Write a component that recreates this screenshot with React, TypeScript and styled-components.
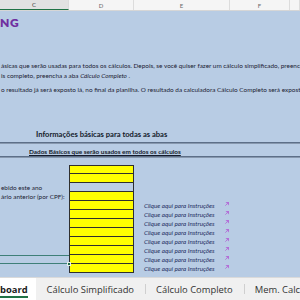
import React from "react";
import styled, { createGlobalStyle } from "styled-components";

const GlobalStyle = createGlobalStyle`
  html, body { margin: 0; padding: 0; width: 300px; height: 300px; overflow: hidden; background: #b8cce4; }
  #root { width: 300px; height: 300px; }
  * { box-sizing: border-box; }
`;

const COLS = [69, 65, 96, 60, 10];

const Page = styled.div`
  width: 300px;
  height: 300px;
  display: flex;
  flex-direction: column;
  overflow: hidden;
  font-family: Lato, "Liberation Sans", sans-serif;
`;

const ColumnHeader = styled.div`
  display: flex;
  height: 11px;
  flex: none;
  background: #f5f5f5;
  border-bottom: 1px solid #d6d6d6;
`;

const HeaderCell = styled.div<{ $w: number; $selected?: boolean }>`
  width: ${(p) => p.$w}px;
  flex: none;
  height: 100%;
  display: flex;
  align-items: center;
  justify-content: center;
  font-size: 6px;
  color: ${(p) => (p.$selected ? "#3c3c3c" : "#6a6a6a")};
  background: ${(p) => (p.$selected ? "#e2e2e2" : "transparent")};
  border-right: 1px solid #dcdcdc;
  border-bottom: ${(p) => (p.$selected ? "1.5px solid #217346" : "none")};
`;

const Sheet = styled.div`
  flex: 1;
  display: flex;
  flex-direction: column;
  overflow: hidden;
  background: #b8cce4;
  white-space: nowrap;
`;

const Title = styled.div`
  margin-top: 5px;
  height: 13px;
  line-height: 13px;
  font-size: 12px;
  font-weight: 800;
  color: #7030a0;
  letter-spacing: 0.6px;
`;

const Intro = styled.div`
  margin-top: 32px;
  display: flex;
  flex-direction: column;
`;

const IntroLine = styled.div<{ $gap?: number }>`
  height: 10px;
  line-height: 10px;
  font-size: 6.4px;
  color: #1c2233;
  margin-top: ${(p) => p.$gap ?? 0}px;
  padding-left: 1px;
  em { font-style: italic; }
`;

const Heading = styled.div`
  margin-top: 34px;
  height: 10px;
  line-height: 10px;
  font-size: 7.6px;
  font-weight: 700;
  color: #141a2a;
  padding-left: 36px;
`;

const Rule = styled.div<{ $gap: number }>`
  margin-top: ${(p) => p.$gap}px;
  height: 2px;
  background: #5d6f88;
  border-bottom: 1px solid #8798ae;
  flex: none;
`;

const SubHeading = styled.div`
  margin-top: 3px;
  height: 9px;
  line-height: 9px;
  font-size: 6.4px;
  font-weight: 700;
  color: #141a2a;
  padding-left: 29px;
  text-decoration: underline;
`;

const Grid = styled.div`
  margin-top: 7px;
  display: flex;
  flex-direction: column;
`;

const Row = styled.div`
  display: grid;
  grid-template-columns: ${COLS.map((c) => c + "px").join(" ")};
  height: 9px;
`;

const LabelCell = styled.div<{ $selected?: boolean }>`
  position: relative;
  font-size: 6.4px;
  color: #1c2233;
  padding-left: 1px;
  border-top: ${(p) => (p.$selected ? "1px solid #3e7f78" : "none")};
  border-bottom: ${(p) => (p.$selected ? "1px solid #3e7f78" : "none")};
  line-height: ${(p) => (p.$selected ? "7px" : "9px")};
`;

const Handle = styled.span`
  position: absolute;
  right: -2px;
  bottom: -3px;
  width: 4px;
  height: 4px;
  background: #1f6b4c;
  border: 1px solid #e8f0e8;
`;

const InputCell = styled.div<{ $filled: boolean; $first?: boolean }>`
  background: ${(p) => (p.$filled ? "#ffff00" : "#bccfe5")};
  border-left: 1px solid #2f2f2f;
  border-right: 1px solid #2f2f2f;
  border-bottom: 1px solid #2f2f2f;
  border-top: ${(p) => (p.$first ? "1px solid #2f2f2f" : "none")};
`;

const HintCell = styled.div`
  display: flex;
  align-items: center;
  justify-content: space-between;
  padding-left: 10px;
  padding-right: 1px;
  font-size: 6.3px;
  font-style: italic;
  color: #1f2e5e;
`;

const Mark = () => (
  <svg width="4" height="4" viewBox="0 0 4 4" style={{ marginTop: -3 }}>
    <polygon points="0.5,0 4,0 4,3.5" fill="#b26fd6" />
    <line x1="2.6" y1="1.4" x2="0.3" y2="3.7" stroke="#b26fd6" strokeWidth="0.9" />
  </svg>
);

const TabBar = styled.div`
  flex: none;
  height: 23px;
  display: flex;
  align-items: stretch;
  background: #f0f0f0;
  border-top: 1px solid #dadada;
  font-family: "Open Sans", "Noto Sans", sans-serif;
  font-size: 9.4px;
  white-space: nowrap;
`;

const ActiveTab = styled.div`
  background: #ffffff;
  padding: 0 8px 0 0;
  display: flex;
  align-items: center;
  font-weight: 700;
  color: #1b1b1b;
  span {
    border-bottom: 2px solid #217346;
    line-height: 12px;
    margin-top: 3px;
  }
`;

const Tab = styled.div<{ $sep?: boolean }>`
  display: flex;
  align-items: center;
  padding: 0 11px;
  color: #333333;
  position: relative;
  &::before {
    content: "";
    display: ${(p) => (p.$sep ? "block" : "none")};
    position: absolute;
    left: 0;
    top: 6px;
    bottom: 6px;
    width: 1px;
    background: #cfcfcf;
  }
`;

const labels: Record<number, string> = {
  2: "ebido este ano",
  3: "ário anterior (por CPF):",
};

export default function App() {
  const rows = Array.from({ length: 12 }, (_, i) => i);
  return (
    <Page>
      <GlobalStyle />
      <ColumnHeader>
        <HeaderCell $w={69} $selected>C</HeaderCell>
        <HeaderCell $w={65}>D</HeaderCell>
        <HeaderCell $w={96}>E</HeaderCell>
        <HeaderCell $w={60}>F</HeaderCell>
        <HeaderCell $w={10}></HeaderCell>
      </ColumnHeader>
      <Sheet>
        <Title>NG</Title>
        <Intro>
          <IntroLine>
            ásicas que serão usadas para todos os cálculos. Depois, se você quiser fazer um cálculo simplificado, preencha a aba
          </IntroLine>
          <IntroLine>
            is completo, preencha a aba <em>Cálculo Completo</em> .
          </IntroLine>
          <IntroLine $gap={4}>
            o resultado já será exposto lá, no final da planilha. O resultado da calculadora Cálculo Completo será exposto
          </IntroLine>
        </Intro>
        <Heading>Informações básicas para todas as abas</Heading>
        <Rule $gap={3} />
        <SubHeading>Dados Básicos que serão usados em todos os cálculos</SubHeading>
        <Rule $gap={0} />
        <Grid>
          {rows.map((i) => (
            <Row key={i}>
              <LabelCell $selected={i === 10}>
                {labels[i] ?? ""}
                {i === 10 && <Handle />}
              </LabelCell>
              <InputCell $filled={i !== 2} $first={i === 0} />
              <HintCell>
                {i >= 4 ? (
                  <>
                    <span>Clique aqui para Instruções</span>
                    <Mark />
                  </>
                ) : null}
              </HintCell>
              <div />
              <div />
            </Row>
          ))}
        </Grid>
      </Sheet>
      <TabBar>
        <ActiveTab>
          <span>board</span>
        </ActiveTab>
        <Tab>Cálculo Simplificado</Tab>
        <Tab $sep>Cálculo Completo</Tab>
        <Tab $sep>Mem. Calc.</Tab>
      </TabBar>
    </Page>
  );
}
